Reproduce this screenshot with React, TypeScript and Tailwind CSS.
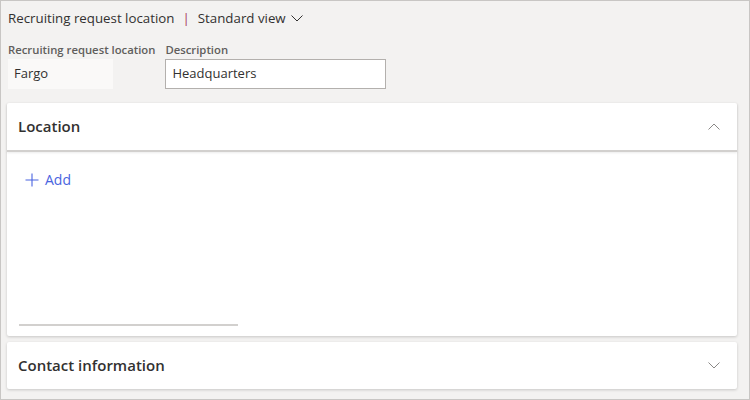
import React from "react";

const font = { fontFamily: '"Segoe UI", "Open Sans", sans-serif' };

function ChevronDown({ className }: { className?: string }) {
  return (
    <svg viewBox="0 0 12 7" className={className} fill="none" stroke="currentColor" strokeWidth="1">
      <path d="M0.5 0.5 L6 6 L11.5 0.5" />
    </svg>
  );
}

function ChevronUp({ className }: { className?: string }) {
  return (
    <svg viewBox="0 0 12 7" className={className} fill="none" stroke="currentColor" strokeWidth="1">
      <path d="M0.5 6.5 L6 1 L11.5 6.5" />
    </svg>
  );
}

export default function App() {
  return (
    <div
      className="w-[750px] h-[400px] bg-[#f3f2f1] border border-[#c8c6c4] flex flex-col overflow-hidden text-[#323130]"
      style={font}
    >
      <div className="flex items-center pl-[7px] pt-[6px] h-[21px] text-[13.3px] leading-[20px] box-content">
        <span>Recruiting request location</span>
        <span className="mx-[8px] text-[#a83a5e]">|</span>
        <span>Standard view</span>
        <ChevronDown className="w-[12px] h-[7px] ml-[5px] mt-[1px] text-[#323130]" />
      </div>

      <div className="flex pl-[7px] mt-[14px] gap-[10px]">
        <div className="flex flex-col">
          <label className="text-[11.3px] leading-[16px] font-semibold text-[#605e5c]">Recruiting request location</label>
          <div className="mt-[1px] w-[105px] h-[30px] bg-[#faf9f8] flex items-center pl-[6px] text-[13px]">Fargo</div>
        </div>
        <div className="flex flex-col">
          <label className="text-[11.3px] leading-[16px] font-semibold text-[#605e5c]">Description</label>
          <div className="mt-[1px] w-[221px] h-[30px] bg-white border border-[#b3b0ad] flex items-center pl-[6px] text-[13px]">
            Headquarters
          </div>
        </div>
      </div>

      <div className="ml-[6px] mr-[12px] mt-[14px] bg-white shadow-[0_1px_3px_rgba(0,0,0,0.18)] rounded-[2px] h-[233px] flex flex-col">
        <div className="h-[49px] flex items-center justify-between pl-[11px] pr-[17px] border-b-2 border-[#d2d0ce] shadow-[0_1px_2px_rgba(0,0,0,0.08)]">
          <span className="text-[15px] font-semibold">Location</span>
          <ChevronUp className="w-[12px] h-[7px] text-[#8a8886]" />
        </div>
        <div className="flex flex-col flex-1 pl-[12px]">
          <div className="mt-[17px] flex items-center text-[#4a64e0] text-[14px]">
            <svg viewBox="0 0 16 16" className="w-[16px] h-[16px] ml-[5px]" fill="none" stroke="currentColor" strokeWidth="1.1">
              <path d="M8 1.5 V14.5 M1.5 8 H14.5" />
            </svg>
            <span className="ml-[5px]">Add</span>
          </div>
          <div className="flex-1" />
          <div className="w-[219px] h-[2px] bg-[#d2d0ce] mb-[10px]" />
        </div>
      </div>

      <div className="ml-[6px] mr-[12px] mt-[6px] bg-white shadow-[0_1px_3px_rgba(0,0,0,0.18)] rounded-[2px] h-[47px] flex items-center justify-between pl-[11px] pr-[17px]">
        <span className="text-[15px] font-semibold">Contact information</span>
        <ChevronDown className="w-[12px] h-[7px] text-[#8a8886]" />
      </div>
    </div>
  );
}
